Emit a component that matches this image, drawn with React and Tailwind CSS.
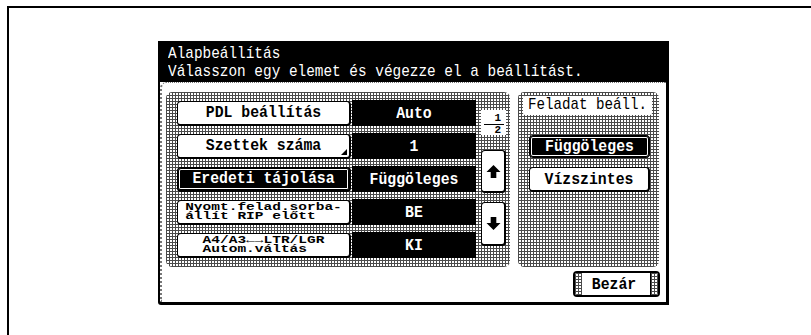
import React from "react";

const mono = "font-['Liberation_Mono','DejaVu_Sans_Mono',monospace]";
const mesh =
  "bg-white [background-image:linear-gradient(90deg,#4a4a4a_1px,transparent_1px),linear-gradient(#4a4a4a_1px,transparent_1px)] [background-size:3px_3px]";

function Arrow({ down }) {
  return (
    <svg width="15" height="15" viewBox="0 0 16 16" className={down ? "rotate-180" : ""}>
      <path d="M8 1 L15.5 8.5 H11 V15 H5 V8.5 H0.5 Z" fill="#000" />
    </svg>
  );
}

function Row({ label, value, selected, small, corner }) {
  return (
    <div className="flex h-[26px] items-center">
      <div
        className={`relative flex h-[25px] w-[174px] items-center justify-center rounded-[4px] border border-b-[2px] border-r-[2px] border-black ${
          selected
            ? "bg-black text-white shadow-[inset_0_0_0_1px_#000,inset_0_0_0_2px_#fff]"
            : "bg-white text-black"
        }`}
      >
        {small ? (
          <div className="scale-y-[0.72] text-left text-[14.5px] font-bold leading-[13px] whitespace-pre">
            {small}
          </div>
        ) : (
          <span className="scale-y-[1.15] text-[14.8px] font-bold leading-none">{label}</span>
        )}
        {corner && (
          <span className="absolute bottom-[2px] right-[2px] h-0 w-0 border-b-[6px] border-l-[6px] border-b-black border-l-transparent" />
        )}
      </div>
      <div className="ml-[1px] flex h-[26px] w-[124px] items-center justify-center bg-black text-white">
        <span className="scale-y-[1.15] text-[14.8px] font-bold leading-none">{value}</span>
      </div>
    </div>
  );
}

export default function App() {
  return (
    <div className={`h-[335px] w-[811px] overflow-hidden bg-white ${mono}`}>
      <div className="ml-[7px] mt-[6px] h-[329px] w-[804px] border-l-2 border-t-2 border-black pl-[149px] pt-[33px]">
        <div className="flex w-[511px] flex-col">
          {/* Title bar */}
          <div className="h-[41px] bg-black pl-[10px] pt-[4px] text-[14.4px] leading-[18px] text-white">
            <div className="origin-left scale-y-[1.12]">Alapbeállítás</div>
            <div className="origin-left scale-y-[1.12]">Válasszon egy elemet és végezze el a beállítást.</div>
          </div>
          {/* Content */}
          <div className="h-[223px] rounded-bl-[3px] border-b-[3px] border-l-[2px] border-r-[3px] border-black">
            <div className="flex h-full flex-col rounded-tl-[6px] border-l-[2px] border-t-[1px] border-dotted border-[#777] pl-[4px] pr-[7px] pt-[9px]">
              <div className="flex h-[175px]">
                {/* Left panel */}
                <div className={`flex h-full w-[344px] rounded-[6px] pl-[11px] pt-[8px] ${mesh}`}>
                  <div className="flex flex-col gap-[7px]">
                    <Row label="PDL beállítás" value="Auto" />
                    <Row label="Szettek száma" value="1" corner />
                    <Row label="Eredeti tájolása" value="Függöleges" selected />
                    <Row small={"Nyomt.felad.sorba-\nállít RIP előtt"} value="BE" />
                    <Row small={"A4/A3←→LTR/LGR\nAutom.váltás"} value="KI" />
                  </div>
                  <div className="ml-[5px] flex w-[25px] flex-col pt-[10px]">
                    <div className="flex h-[25px] flex-col items-end bg-white pr-[2px] pt-[4px] text-[11px] font-bold leading-[9px] text-black">
                      <span className="pr-[3px]">1</span>
                      <span className="my-[1px] h-[2px] w-[20px] bg-black" />
                      <span className="pr-[3px]">2</span>
                    </div>
                    <div className="mt-[15px] flex h-[43px] items-center justify-center rounded-[4px] border border-b-[2px] border-r-[2px] border-black bg-white">
                      <Arrow />
                    </div>
                    <div className="mt-[9px] flex h-[44px] items-center justify-center rounded-[4px] border border-b-[2px] border-r-[2px] border-black bg-white">
                      <Arrow down />
                    </div>
                  </div>
                </div>
                {/* Right panel */}
                <div className={`ml-[8px] flex h-full w-[141px] flex-col rounded-[6px] pt-[4px] ${mesh}`}>
                  <div className="ml-[5px] flex h-[19px] w-[129px] items-center justify-center rounded-[2px] bg-white text-black">
                    <span className="scale-y-[1.12] text-[14.2px] leading-none">Feladat beáll.</span>
                  </div>
                  <div className="ml-[11px] mt-[20px] flex h-[23px] w-[121px] items-center justify-center rounded-[4px] border border-black bg-black text-white shadow-[inset_0_0_0_1px_#000,inset_0_0_0_2px_#fff]">
                    <span className="scale-y-[1.15] text-[14.8px] font-bold leading-none">Függöleges</span>
                  </div>
                  <div className="ml-[11px] mt-[9px] flex h-[25px] w-[121px] items-center justify-center rounded-[4px] border border-b-[2px] border-r-[2px] border-black bg-white text-black">
                    <span className="scale-y-[1.15] text-[14.8px] font-bold leading-none">Vízszintes</span>
                  </div>
                </div>
              </div>
              {/* Bezár */}
              <div className="mt-[4px] flex justify-end">
                <div className="mr-[-1px] flex h-[26px] w-[87px] overflow-hidden rounded-[4px] border-2 border-black bg-white">
                  <div className={`w-[7px] ${mesh}`} />
                  <div className="flex flex-1 items-center justify-center pr-[4px] text-black">
                    <span className="scale-y-[1.15] text-[14.8px] font-bold leading-none">Bezár</span>
                  </div>
                  <div className={`w-[8px] border-l border-black ${mesh}`} />
                </div>
              </div>
            </div>
          </div>
        </div>
      </div>
    </div>
  );
}
